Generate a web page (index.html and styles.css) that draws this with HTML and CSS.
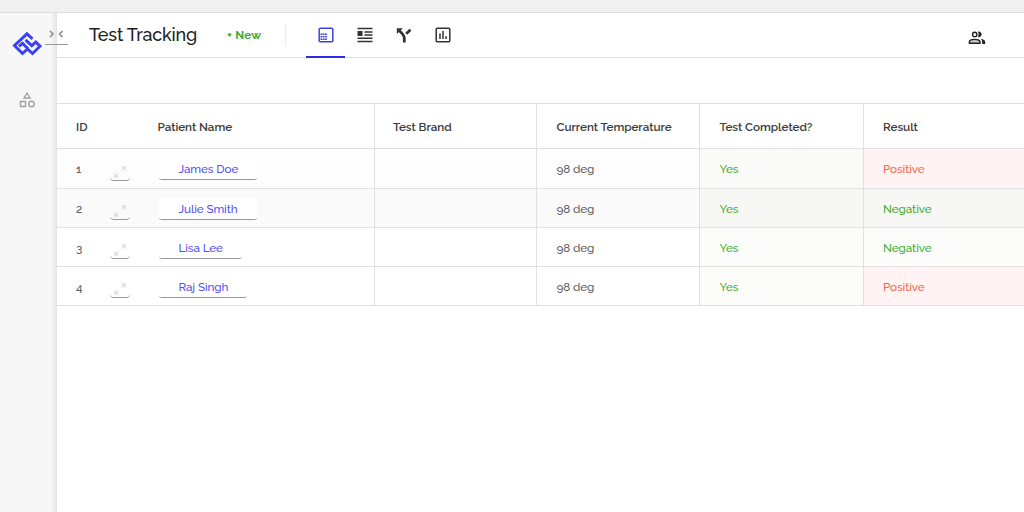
FILE: index.html
```html
<!doctype html>
<html lang="en">
<head>
<meta charset="utf-8">
<meta name="viewport" content="width=device-width, initial-scale=1.0">
<link rel="stylesheet" href="styles.css">
<title>Test Tracking</title>
</head>
<body>
<div class="topbar"></div>
<div class="app">
  <nav class="sidebar">
    <svg class="logo" width="30" height="26" viewBox="0 0 30 26" fill="none" stroke="#3a41f5" stroke-width="3">
      <path d="M20.500 7.800 15 2.800 2.500 14.500 10.500 22.500 15.500 18 20.500 22.500 28 15.200 23.800 11 19.800 14.600 13.500 8.800"/>
      <path d="M7 15.300 10.500 12.300 16 17.800"/>
    </svg>
    <svg class="shapes" width="18" height="18" viewBox="0 0 18 18" fill="none" stroke="#a3a3a3" stroke-width="1.4">
      <path d="M9 2 12 7H6z"/>
      <path d="M2.500 10.500h5v5h-5z"/>
      <circle cx="13.500" cy="13" r="2.800"/>
    </svg>
    <button class="collapse">
      <svg width="16" height="8" viewBox="0 0 16 8" fill="none" stroke="#7d7d7d" stroke-width="1.4"><path d="M2 1 5 4 2 7M14.500 1l-3 3 3 3"/></svg>
    </button>
  </nav>
  <main class="main">
    <header class="header">
      <h1 class="title">Test Tracking</h1>
      <a class="new">+ New</a>
      <div class="tabs">
        <a class="tab active">
          <svg width="16" height="16" viewBox="0 0 16 16" fill="none" stroke="currentColor" stroke-width="1.5"><rect x="1.200" y="1.200" width="13.600" height="13.600" rx="1"/><path d="M2.500 7.200h6.500M2.500 9.700h6.500M2.500 12.200h6.500" stroke-width="1.500" stroke-dasharray="1.800 .5"/></svg>
        </a>
        <a class="tab">
          <svg width="16" height="16" viewBox="0 0 16 16" fill="none" stroke="currentColor" stroke-width="1.6"><path d="M.5 1.500h15M7.500 5h8M7.500 8h8M.5 11.300h15M.5 14.500h15"/><path d="M.5 4h5v5h-5z" fill="currentColor" stroke="none"/></svg>
        </a>
        <a class="tab">
          <svg width="16" height="16" viewBox="0 0 16 16" fill="none" stroke="currentColor" stroke-width="2.8"><path d="M8.300 15.500V11Q8.300 8 3 3.500M10.200 6.800 14.500 2.800"/><path d="M.8 1.200H7L.8 7z" fill="currentColor" stroke="none"/></svg>
        </a>
        <a class="tab">
          <svg width="16" height="16" viewBox="0 0 16 16" fill="none" stroke="currentColor" stroke-width="1.5"><rect x="1.200" y="1.200" width="13.600" height="13.600" rx="1"/><path d="M5 6.500V12M8 4v8M11 9.300V12"/></svg>
        </a>
      </div>
      <svg class="people" width="18" height="14" viewBox="0 0 18 14" fill="none" stroke="#222" stroke-width="1.4">
        <circle cx="6.700" cy="3.400" r="2.200"/>
        <path d="M1.400 12.200v-1.400c0-3.200 10.600-3.200 10.600 0v1.400z" fill="#ccc"/>
        <path d="M10 .6c4.800-.6 4.800 6.200 0 5.700q1.400-2.900 0-5.700zM12.500 7.800q4.700.8 4.700 3v2.100h-3v-2.100q0-1.800-1.700-3z" fill="#222" stroke="none"/>
      </svg>
    </header>
    <div class="toolbar"></div>
    <div class="table">
      <div class="row head">
        <div class="cell first"><span class="id">ID</span><span>Patient Name</span></div>
        <div class="cell">Test Brand</div>
        <div class="cell">Current Temperature</div>
        <div class="cell">Test Completed?</div>
        <div class="cell">Result</div>
      </div>
      <div class="row odd">
        <div class="cell first"><span class="id">1</span><a class="expand"><svg width="12" height="12" viewBox="0 0 12 12"><path d="M7.500 1H11v3.500M11 1 7.500 4.500M1 7.500V11h3.500M1 11l3.500-3.500"/></svg></a><a class="name">James Doe</a></div>
        <div class="cell"></div>
        <div class="cell">98 deg</div>
        <div class="cell good">Yes</div>
        <div class="cell bad">Positive</div>
      </div>
      <div class="row shade">
        <div class="cell first"><span class="id">2</span><a class="expand"><svg width="12" height="12" viewBox="0 0 12 12"><path d="M7.500 1H11v3.500M11 1 7.500 4.500M1 7.500V11h3.500M1 11l3.500-3.500"/></svg></a><a class="name">Julie Smith</a></div>
        <div class="cell"></div>
        <div class="cell">98 deg</div>
        <div class="cell good">Yes</div>
        <div class="cell good">Negative</div>
      </div>
      <div class="row">
        <div class="cell first"><span class="id">3</span><a class="expand"><svg width="12" height="12" viewBox="0 0 12 12"><path d="M7.500 1H11v3.500M11 1 7.500 4.500M1 7.500V11h3.500M1 11l3.500-3.500"/></svg></a><a class="name">Lisa Lee</a></div>
        <div class="cell"></div>
        <div class="cell">98 deg</div>
        <div class="cell good">Yes</div>
        <div class="cell good">Negative</div>
      </div>
      <div class="row">
        <div class="cell first"><span class="id">4</span><a class="expand"><svg width="12" height="12" viewBox="0 0 12 12"><path d="M7.500 1H11v3.500M11 1 7.500 4.500M1 7.500V11h3.500M1 11l3.500-3.500"/></svg></a><a class="name">Raj Singh</a></div>
        <div class="cell"></div>
        <div class="cell">98 deg</div>
        <div class="cell good">Yes</div>
        <div class="cell bad">Positive</div>
      </div>
    </div>
  </main>
</div>
</body>
</html>
```
FILE: styles.css
```css
* {
    box-sizing: border-box;
}
body {
    margin: 0;
    height: 512px;
    overflow: hidden;
    display: flex;
    flex-direction: column;
    font-family: Raleway, Lato, "Open Sans", sans-serif;
    font-size: 11.7px;
    font-weight: 500;
    letter-spacing: -.1px;
    color: #606060;
    background: #fff;
}
.topbar {
    height: 13px;
    background: #f0f0f0;
    border-bottom: 1px solid #dcdcdc;
}
.app {
    flex: 1;
    display: flex;
}
.sidebar {
    position: relative;
    width: 57px;
    display: flex;
    flex-direction: column;
    padding-left: 12px;
    background: linear-gradient(to right, #f7f7f7 51px, #e2e2e2 57px);
}
.logo {
    margin-top: 18px;
}
.shapes {
    margin: 34px 0 0 6px;
}
.collapse {
    position: absolute;
    left: 45px;
    top: 13px;
    width: 23px;
    height: 19px;
    padding: 0 0 2px 3px;
    display: flex;
    align-items: center;
    background: none;
    border: 0;
    border-bottom: 1px solid #999;
}
.main {
    flex: 1;
    min-width: 0;
}
.header {
    height: 45px;
    display: flex;
    align-items: center;
    padding: 0 38px 0 32px;
    border-bottom: 1px solid #e0e0e0;
}
.title {
    width: 138px;
    margin: 0;
    font-size: 18px;
    font-weight: 500;
    letter-spacing: -.2px;
    line-height: 42px;
    color: #1c1c24;
}
.new {
    width: 59px;
    height: 22px;
    line-height: 23px;
    border-right: 1px solid #ececec;
    font-weight: 700;
    letter-spacing: .2px;
    color: #3aaa35;
}
.tabs {
    display: flex;
    align-self: stretch;
    margin-left: 20px;
}
.tab {
    width: 39px;
    height: 45px;
    padding-top: 14px;
    text-align: center;
    color: #333;
}
.tab.active {
    color: #3a41f5;
    border-bottom: 2px solid #2b2bea;
}
.people {
    margin: 6px 0 0 auto;
}
.toolbar {
    height: 46px;
    border-bottom: 1px solid #e0e0e0;
}
.row {
    display: grid;
    grid-template-columns: 318px 162px 163px 164px 1fr;
    height: 39px;
    border-bottom: 1px solid #e0e0e0;
}
.row.head {
    height: 45px;
    font-weight: 600;
    letter-spacing: -.05px;
    color: #3c3c3c;
}
.row.odd {
    height: 40px;
    background: #fdfdfd;
}
.row.shade {
    background: #fafafa;
}
.cell {
    display: flex;
    align-items: center;
    padding: 1px 0 0 19.5px;
    border-right: 1px solid #e0e0e0;
}
.cell.first {
    padding-left: 19px;
}
.cell:nth-child(2) {
    padding-left: 18px;
}
.cell:last-child {
    padding-left: 19px;
    border-right: 0;
}
.head .id {
    width: 81.5px;
}
.id {
    width: 34px;
}
.expand {
    width: 20px;
    height: 15px;
    margin: 8px 29px 0 0;
    border-bottom: 1px solid #999;
    border-radius: 4px;
    text-align: center;
    line-height: 10px;
}
.expand path {
    fill: none;
    stroke: #d0d0d0;
}
.name {
    height: 22px;
    padding: 0 19px 0 19.5px;
    line-height: 23px;
    background: #fff;
    border-bottom: 1px solid #999;
    border-radius: 3px;
    color: #5353f3;
}
.good {
    background: #fcfdfa;
    color: #45ad33;
}
.odd .good {
    background: #fafaf8;
}
.shade .good {
    background: #f7f8f6;
}
.bad {
    background: #fff3f3;
    color: #f8694c;
}
```
